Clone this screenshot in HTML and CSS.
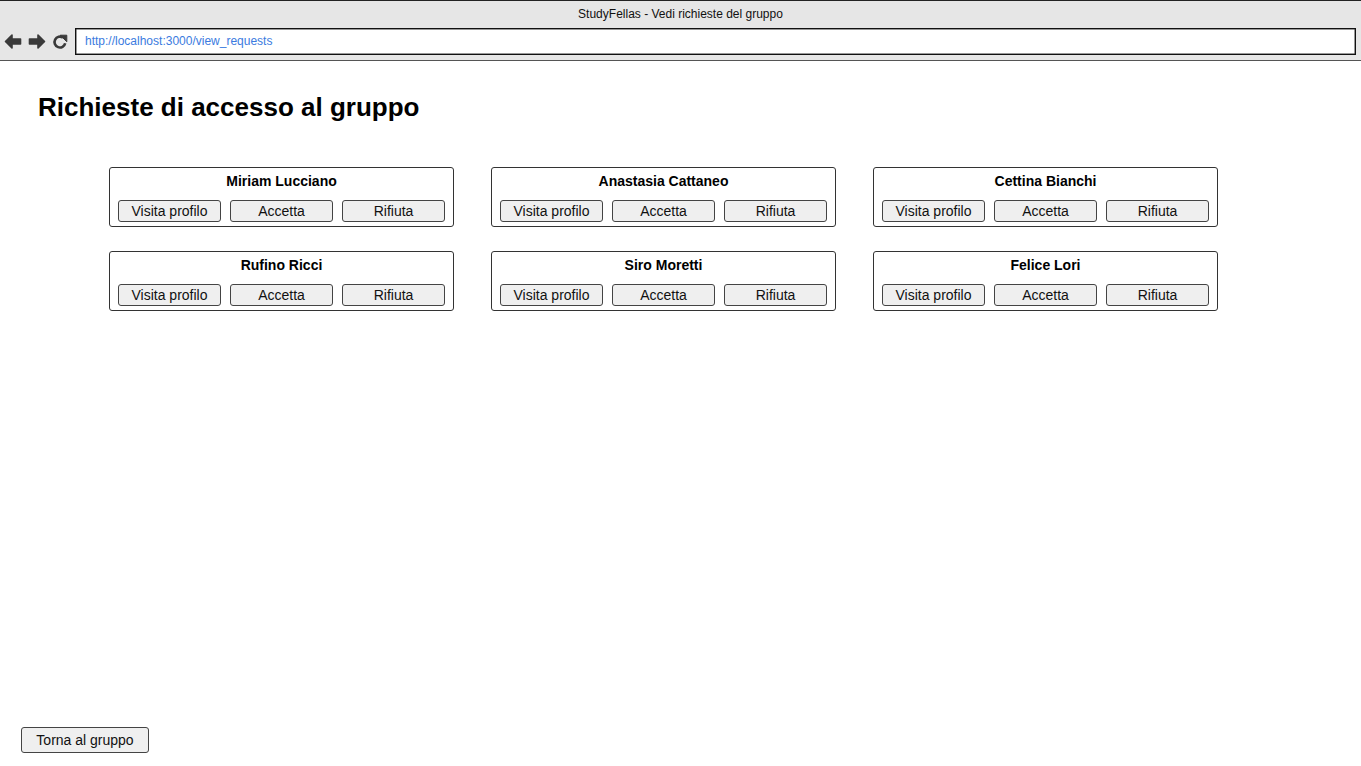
FILE: index.html
```html
<!DOCTYPE html>
<html lang="it">
<head>
<meta charset="utf-8">
<title>StudyFellas - Vedi richieste del gruppo</title>
<link rel="stylesheet" href="styles.css">
</head>
<body>
<div class="chrome">
  <div class="chrome-title">StudyFellas - Vedi richieste del gruppo</div>
  <div class="chrome-bar">
    <div class="nav">
      <svg class="nav-icon" width="18" height="17" viewBox="0 0 18 17"><path d="M1.5 8.5L8 2V6H16.5V11H8V15Z" fill="#3a3a3a" stroke="#3a3a3a" stroke-width="1.6" stroke-linejoin="round"/></svg>
      <svg class="nav-icon" width="18" height="17" viewBox="0 0 18 17"><path d="M16.5 8.5L10 2V6H1.5V11H10V15Z" fill="#3a3a3a" stroke="#3a3a3a" stroke-width="1.6" stroke-linejoin="round"/></svg>
      <svg class="nav-icon" width="16" height="17" viewBox="0 0 16 17"><path d="M13.2 10.2A5.4 5.4 0 1 1 11 4.6" fill="none" stroke="#3a3a3a" stroke-width="2.6"/><path d="M8.2 2.2H14.8V8.8Z" fill="#3a3a3a" stroke="#3a3a3a" stroke-width="1" stroke-linejoin="round"/></svg>
    </div>
    <div class="address">http://localhost:3000/view_requests</div>
  </div>
</div>
<main class="page">
  <h1 class="heading">Richieste di accesso al gruppo</h1>
  <div class="grid">
    <div class="card"><div class="name">Miriam Lucciano</div><div class="actions"><button class="btn">Visita profilo</button><button class="btn">Accetta</button><button class="btn">Rifiuta</button></div></div>
    <div class="card"><div class="name">Anastasia Cattaneo</div><div class="actions"><button class="btn">Visita profilo</button><button class="btn">Accetta</button><button class="btn">Rifiuta</button></div></div>
    <div class="card"><div class="name">Cettina Bianchi</div><div class="actions"><button class="btn">Visita profilo</button><button class="btn">Accetta</button><button class="btn">Rifiuta</button></div></div>
    <div class="card"><div class="name">Rufino Ricci</div><div class="actions"><button class="btn">Visita profilo</button><button class="btn">Accetta</button><button class="btn">Rifiuta</button></div></div>
    <div class="card"><div class="name">Siro Moretti</div><div class="actions"><button class="btn">Visita profilo</button><button class="btn">Accetta</button><button class="btn">Rifiuta</button></div></div>
    <div class="card"><div class="name">Felice Lori</div><div class="actions"><button class="btn">Visita profilo</button><button class="btn">Accetta</button><button class="btn">Rifiuta</button></div></div>
  </div>
  <div class="spacer"></div>
  <div class="footer"><button class="btn back">Torna al gruppo</button></div>
</main>
</body>
</html>
```
FILE: styles.css
```css
* { box-sizing: border-box; }
html, body { margin: 0; padding: 0; }
body {
  font-family: "Liberation Sans", Arial, sans-serif;
  color: #000;
  background: #fff;
  width: 1361px;
  height: 766px;
  overflow: hidden;
  display: flex;
  flex-direction: column;
}
.chrome {
  height: 61px;
  background: #e6e6e6;
  border-top: 1px solid #222;
  border-bottom: 1px solid #555;
  flex: none;
}
.chrome-title {
  height: 27px;
  padding-top: 6px;
  text-align: center;
  font-size: 12px;
  line-height: 14px;
  color: #111;
}
.chrome-bar {
  display: flex;
  align-items: center;
  padding: 0 5px 0 4px;
  height: 27px;
}
.nav {
  display: flex;
  align-items: center;
  gap: 6px;
  width: 71px;
  flex: none;
}
.nav-icon { display: block; }
.address {
  flex: 1;
  height: 27px;
  border: 1px solid #111;
  box-shadow: inset 0 0 0 0.5px #333;
  background: #fff;
  font-size: 12px;
  line-height: 25px;
  padding-left: 9px;
  color: #3b7be0;
}
.page {
  flex: 1;
  display: flex;
  flex-direction: column;
  padding: 0 0 13px 0;
}
.heading {
  margin: 31px 0 0 38px;
  font-size: 26px;
  line-height: 30px;
  font-weight: bold;
}
.grid {
  margin: 45px 0 0 109px;
  display: grid;
  grid-template-columns: repeat(3, 345px);
  column-gap: 37px;
  row-gap: 24px;
}
.card {
  height: 60px;
  border: 1px solid #333;
  border-radius: 3px;
  padding: 5px 8px 0 8px;
}
.name {
  text-align: center;
  font-weight: bold;
  font-size: 14px;
  line-height: 17px;
  margin-bottom: 10px;
}
.actions {
  display: flex;
  gap: 9px;
}
.btn {
  font-family: "Liberation Sans", Arial, sans-serif;
  font-size: 14px;
  color: #111;
  background: #efefef;
  border: 1px solid #444;
  border-radius: 3px;
  padding: 0;
  width: 103px;
  height: 22px;
  line-height: 20px;
}
.spacer { flex: 1; }
.footer { padding-left: 21px; }
.back {
  width: 128px;
  height: 26px;
  line-height: 24px;
}
```
